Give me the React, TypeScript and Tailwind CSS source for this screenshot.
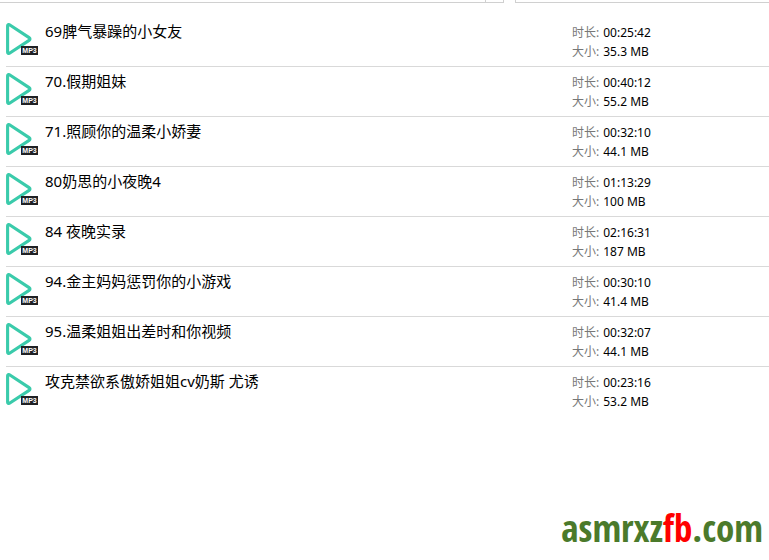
interface Track {
  title: string;
  duration: string;
  size: string;
}

const tracks: Track[] = [
  { title: "69脾气暴躁的小女友", duration: "00:25:42", size: "35.3 MB" },
  { title: "70.假期姐妹", duration: "00:40:12", size: "55.2 MB" },
  { title: "71.照顾你的温柔小娇妻", duration: "00:32:10", size: "44.1 MB" },
  { title: "80奶思的小夜晚4", duration: "01:13:29", size: "100 MB" },
  { title: "84 夜晚实录", duration: "02:16:31", size: "187 MB" },
  { title: "94.金主妈妈惩罚你的小游戏", duration: "00:30:10", size: "41.4 MB" },
  { title: "95.温柔姐姐出差时和你视频", duration: "00:32:07", size: "44.1 MB" },
  { title: "攻克禁欲系傲娇姐姐cv奶斯 尤诱", duration: "00:23:16", size: "53.2 MB" },
];

function Mp3Icon() {
  return (
    <div className="relative h-8 w-8 shrink-0">
      <svg viewBox="0 0 32 32" className="h-8 w-8" aria-hidden="true">
        <path
          d="M1.6 2.7v26.6c0 1 1 1.5 1.9.9l19.6-12.8c1.2-.8 1.2-2 0-2.8L3.5 1.8c-.9-.6-1.9-.1-1.9.9z"
          fill="none"
          stroke="#3acbab"
          strokeWidth="3.1"
          strokeLinejoin="round"
        />
      </svg>
      <span className="absolute right-0 bottom-0 flex h-[9px] w-[17px] items-center justify-center bg-[#202124] font-['Liberation_Sans',sans-serif] text-[7px] leading-none font-bold text-white">
        MP3
      </span>
    </div>
  );
}

function TrackRow({ track }: { track: Track }) {
  return (
    <li className="flex h-[50px] items-start border-b border-[#d9d9d9] pt-1.5 last:border-b-0">
      <Mp3Icon />
      <p className="min-w-0 flex-1 pl-[7px] text-[15px] leading-4">
        {track.title}
      </p>
      <dl className="w-[197px] shrink-0 text-[12px] leading-[19px]">
        <div className="flex gap-1">
          <dt className="text-[#777]">时长:</dt>
          <dd>{track.duration}</dd>
        </div>
        <div className="flex gap-1">
          <dt className="text-[#777]">大小:</dt>
          <dd>{track.size}</dd>
        </div>
      </dl>
    </li>
  );
}

export default function App() {
  return (
    <div className="flex min-h-screen flex-col bg-white font-['Noto_Sans','Noto_Sans_CJK_SC',sans-serif] text-black">
      {/* bottom edges of the toolbar boxes */}
      <div className="flex h-[3px] gap-[11px]">
        <div className="flex flex-[504] justify-end border-r border-b border-[#d0d0d0]">
          <div className="w-[18px] border-l border-[#d0d0d0]" />
        </div>
        <div className="flex-[254] border-b border-l border-[#d0d0d0]" />
      </div>

      <ul className="mt-3.5 pl-1.5">
        {tracks.map((track) => (
          <TrackRow key={track.title} track={track} />
        ))}
      </ul>

      <footer className="mt-auto flex justify-end pr-1.5 pb-2">
        <p className="font-['Open_Sans_Condensed','Open_Sans',sans-serif] text-[37px] leading-[48px] font-bold text-[#4b7a2b]">
          asmrxz<span className="text-[#f00]">fb</span>.com
        </p>
      </footer>
    </div>
  );
}
